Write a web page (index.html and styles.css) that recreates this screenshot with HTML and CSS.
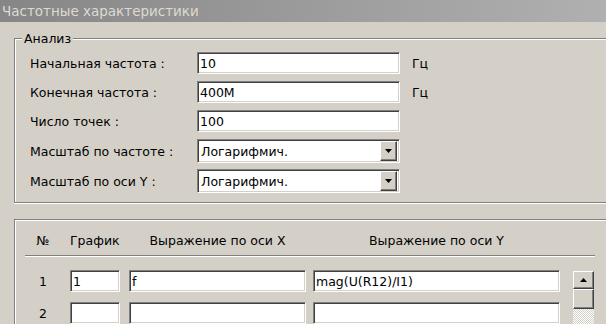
FILE: index.html
```html
<!DOCTYPE html>
<html lang="ru">
<head>
    <meta charset="UTF-8" />
    <title>Частотные характеристики</title>
    <link rel="stylesheet" href="styles.css">
</head>
<body>
    <div class="window">
        <div class="titlebar">Частотные характеристики</div>
        <div class="content">
            <fieldset class="group analysis">
                <legend>Анализ</legend>
                <div class="field-row">
                    <label>Начальная частота :</label>
                    <input class="field" type="text" value="10">
                    <span class="unit">Гц</span>
                </div>
                <div class="field-row">
                    <label>Конечная частота :</label>
                    <input class="field" type="text" value="400M">
                    <span class="unit">Гц</span>
                </div>
                <div class="field-row">
                    <label>Число точек :</label>
                    <input class="field" type="text" value="100">
                </div>
                <div class="field-row combo-row">
                    <label>Масштаб по частоте :</label>
                    <div class="combo">
                        <span class="combo-text">Логарифмич.</span>
                        <span class="btn3d combo-btn">
                            <svg width="7" height="4" viewBox="0 0 7 4"><path d="M0 0h7L3.5 4z" fill="#000"/></svg>
                        </span>
                    </div>
                </div>
                <div class="field-row combo-row last">
                    <label>Масштаб по оси Y :</label>
                    <div class="combo">
                        <span class="combo-text">Логарифмич.</span>
                        <span class="btn3d combo-btn">
                            <svg width="7" height="4" viewBox="0 0 7 4"><path d="M0 0h7L3.5 4z" fill="#000"/></svg>
                        </span>
                    </div>
                </div>
            </fieldset>

            <div class="group plots">
                <div class="table-head">
                    <span class="num">№</span>
                    <span>График</span>
                    <span class="center">Выражение по оси X</span>
                    <span class="center">Выражение по оси Y</span>
                </div>
                <div class="separator"></div>
                <div class="table-body">
                    <span class="num">1</span>
                    <input class="field graph" type="text" value="1">
                    <input class="field expr-x" type="text" value="f">
                    <input class="field expr-y" type="text" value="mag(U(R12)/I1)">
                    <div class="scrollbar">
                        <span class="btn3d scroll-up">
                            <svg width="7" height="4" viewBox="0 0 7 4"><path d="M3.5 0L7 4H0z" fill="#000"/></svg>
                        </span>
                        <span class="btn3d scroll-thumb"></span>
                        <span class="scroll-track"></span>
                    </div>

                    <span class="num">2</span>
                    <input class="field graph" type="text" value="">
                    <input class="field expr-x" type="text" value="">
                    <input class="field expr-y" type="text" value="">
                </div>
            </div>
        </div>
    </div>
</body>
</html>
```

FILE: styles.css
```css
html, body {
    margin: 0;
    padding: 0;
    overflow: hidden;
}

body {
    background: #d4d0c8;
    font-family: "DejaVu Sans", Verdana, sans-serif;
    font-size: 12.5px;
    line-height: 15px;
    color: #000;
}

.window {
    width: 606px;
    height: 324px;
    overflow: hidden;
}

.titlebar {
    height: 22px;
    line-height: 22px;
    padding-left: 2px;
    font-size: 13.5px;
    color: #dedad2;
    background: linear-gradient(to right, #868686, #b0b0b0);
}

.content {
    padding: 9px 0 0 14px;
    overflow: hidden;
}

/* etched group boxes, they run on past the right edge of the window */
.group {
    margin: 0;
    width: 700px;
    border: 1px solid #808080;
    border-right: 0;
    box-shadow: inset 1px 1px 0 #fff, 0 1px 0 #fff;
    box-sizing: border-box;
}

.analysis {
    padding: 6px 0 9px 15px;
}

    .analysis legend {
        margin-left: -8px;
        padding: 0 2px;
        background: #d4d0c8;
    }

.field-row {
    display: flex;
    align-items: center;
    height: 22px;
    margin-bottom: 7px;
}

    .field-row label {
        width: 167px;
        padding-top: 1px;
    }

    .field-row.combo-row {
        height: 24px;
        margin-top: 2px;
        margin-bottom: 6px;
    }

    .field-row.last {
        margin-bottom: 0;
    }

.unit {
    margin-left: 12px;
}

/* sunken edit box */
.field {
    box-sizing: border-box;
    height: 22px;
    margin: 0;
    padding: 0 2px;
    font: inherit;
    color: #000;
    background: #fff;
    border: 1px solid;
    border-color: #808080 #fff #fff #808080;
    box-shadow: inset 1px 1px 0 #404040, inset -1px -1px 0 #d4d0c8;
    outline: none;
}

.field-row .field {
    width: 203px;
}

.combo {
    box-sizing: border-box;
    width: 203px;
    height: 24px;
    display: flex;
    align-items: center;
    justify-content: space-between;
    padding: 0 2px 0 3px;
    background: #fff;
    border: 1px solid;
    border-color: #808080 #fff #fff #808080;
    box-shadow: inset 1px 1px 0 #404040, inset -1px -1px 0 #d4d0c8;
}

/* raised button */
.btn3d {
    box-sizing: border-box;
    display: flex;
    align-items: center;
    justify-content: center;
    background: #d4d0c8;
    border: 1px solid;
    border-color: #fff #404040 #404040 #fff;
    box-shadow: inset -1px -1px 0 #808080;
}

.combo-btn {
    width: 17px;
    height: 20px;
}

.plots {
    margin-top: 16px;
    height: 120px;
    padding: 13px 0 0 10px;
}

.table-head,
.table-body {
    display: grid;
    grid-template-columns: 45px 59px 184px 260px 21px;
}

.num {
    padding-right: 9px;
    text-align: center;
}

.center {
    text-align: center;
    padding-right: 7px;
}

.table-head .center:last-child {
    padding-right: 13px;
}

.separator {
    width: 570px;
    margin-top: 7px;
    border-top: 1px solid #808080;
    border-bottom: 1px solid #fff;
}

.table-body {
    margin-top: 13px;
    grid-auto-rows: 22px;
    row-gap: 10px;
    align-items: center;
}

.graph {
    width: 50px;
}

.expr-x {
    width: 177px;
}

.expr-y {
    width: 247px;
}

.scrollbar {
    grid-column: 5;
    grid-row: 1 / span 3;
    align-self: start;
    height: 80px;
    margin-top: 1px;
    display: flex;
    flex-direction: column;
}

.scroll-up {
    height: 18px;
}

.scroll-thumb {
    height: 20px;
}

.scroll-track {
    flex: 1;
    background: repeating-conic-gradient(#fff 0 25%, #d4d0c8 0 50%) 0 0 / 2px 2px;
}
```
